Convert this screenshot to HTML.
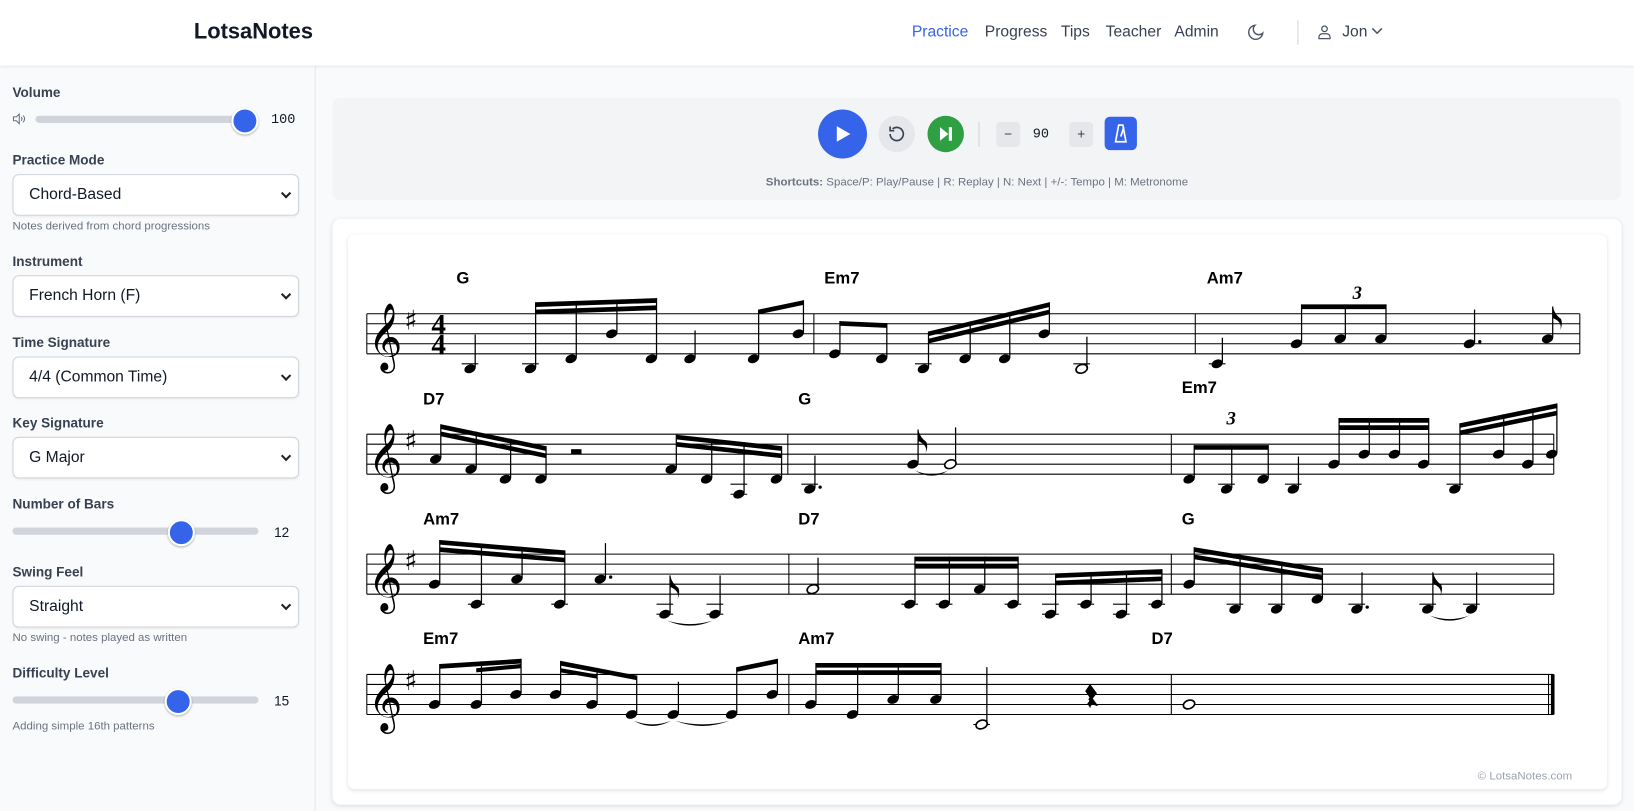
<!DOCTYPE html>
<html><head><meta charset="utf-8">
<style>
html,body{margin:0;padding:0;width:1634px;height:811px;overflow:hidden;background:#f9fafb;}
#w{position:absolute;left:0;top:0;width:1568px;height:778px;transform:scale(1.04209,1.04242);transform-origin:0 0;font-family:"Liberation Sans","DejaVu Sans",sans-serif;color:#111827;}
.hdr{position:absolute;left:0;top:0;width:1568px;height:63px;background:#fff;box-shadow:0 1px 3px rgba(0,0,0,.12);z-index:2}
.logo{position:absolute;left:186px;top:19px;font-size:21px;font-weight:bold;color:#111827}
.nav{position:absolute;top:22px;font-size:15px;color:#374151}
.side{position:absolute;left:0;top:63px;width:302px;height:715px;border-right:1px solid #e5e7eb;background:#f9fafb}
.lbl{position:absolute;left:12px;font-size:13px;font-weight:bold;color:#374151}
.sel{position:absolute;left:12px;width:273px;height:38px;background:#fff;border:1px solid #d1d5db;border-radius:6px;box-shadow:0 1px 2px rgba(0,0,0,.06);font-size:15px;line-height:38px;text-indent:15px;color:#111827}
.sel:after{content:"";position:absolute;right:8px;top:14px;width:5px;height:5px;border-right:2px solid #222;border-bottom:2px solid #222;transform:rotate(45deg)}
.hint{position:absolute;left:12px;font-size:11px;color:#6b7280}
.trk{position:absolute;height:7px;border-radius:4px;background:#d1d5db}
.th{position:absolute;width:22px;height:22px;border-radius:50%;background:#3563e9;border:2px solid #fff;box-shadow:0 1px 2px rgba(0,0,0,.3)}
.val{position:absolute;font-size:13px;color:#111827}
.ctrl{position:absolute;left:319px;top:94px;width:1237px;height:98px;background:#f3f4f6;border-radius:8px}
.card{position:absolute;left:319px;top:210px;width:1237px;height:562px;background:#fff;border-radius:8px;box-shadow:0 1px 4px rgba(0,0,0,.12)}
.inner{position:absolute;left:334px;top:225px;width:1208px;height:532px;background:#fff;border-radius:6px;box-shadow:0 1px 4px rgba(0,0,0,.12)}
</style></head><body><div id="w">
<div class="hdr">
<div class="logo">LotsaNotes</div>
<div class="nav" style="left:875px;color:#3563e9">Practice</div>
<div class="nav" style="left:945px">Progress</div>
<div class="nav" style="left:1018px">Tips</div>
<div class="nav" style="left:1061px">Teacher</div>
<div class="nav" style="left:1127px">Admin</div>
<svg style="position:absolute;left:1196px;top:22px" width="18" height="18" viewBox="0 0 24 24" fill="none" stroke="#4b5563" stroke-width="1.8"><path d="M21 13A9 9 0 1 1 11 3a7 7 0 0 0 10 10z"/></svg>
<div style="position:absolute;left:1245px;top:19px;width:1px;height:24px;background:#d1d5db"></div>
<svg style="position:absolute;left:1263px;top:22px" width="16" height="18" viewBox="0 0 24 24" fill="none" stroke="#4b5563" stroke-width="1.8"><circle cx="12" cy="7" r="4"/><path d="M4 21v-2a5 5 0 0 1 5-5h6a5 5 0 0 1 5 5v2z"/></svg>
<div class="nav" style="left:1288px">Jon</div>
<svg style="position:absolute;left:1316px;top:26px" width="11" height="8" viewBox="0 0 12 8" fill="none" stroke="#4b5563" stroke-width="1.6"><path d="M1 1l5 5 5-5"/></svg>
</div>

<div class="side">
<div class="lbl" style="top:18px">Volume</div>
<svg style="position:absolute;left:12px;top:45px" width="13" height="12" viewBox="0 0 14 12" fill="none" stroke="#6b7280" stroke-width="1.1"><path d="M1 4h3l3-3v10L4 8H1z"/><path d="M9 4q1.5 2 0 4M11 2.5q3 3.5 0 7"/></svg>
<div class="trk" style="left:34px;top:48px;width:206px"></div><div class="th" style="left:222px;top:40px"></div>
<div class="val" style="left:260px;top:44px;font-family:'Liberation Mono',monospace">100</div>
<div class="lbl" style="top:83px">Practice Mode</div>
<div class="sel" style="top:104px">Chord-Based</div>
<div class="hint" style="top:148px">Notes derived from chord progressions</div>
<div class="lbl" style="top:180px">Instrument</div>
<div class="sel" style="top:201px">French Horn (F)</div>
<div class="lbl" style="top:258px">Time Signature</div>
<div class="sel" style="top:279px">4/4 (Common Time)</div>
<div class="lbl" style="top:335px">Key Signature</div>
<div class="sel" style="top:356px">G Major</div>
<div class="lbl" style="top:413px">Number of Bars</div>
<div class="trk" style="left:12px;top:443px;width:236px"></div><div class="th" style="left:161px;top:435px"></div>
<div class="val" style="left:263px;top:440px">12</div>
<div class="lbl" style="top:478px">Swing Feel</div>
<div class="sel" style="top:499px">Straight</div>
<div class="hint" style="top:543px">No swing - notes played as written</div>
<div class="lbl" style="top:575px">Difficulty Level</div>
<div class="trk" style="left:12px;top:605px;width:236px"></div><div class="th" style="left:158px;top:597px"></div>
<div class="val" style="left:263px;top:602px">15</div>
<div class="hint" style="top:628px">Adding simple 16th patterns</div>
</div>

<div class="ctrl">
<div style="position:absolute;left:466px;top:11px;width:47px;height:47px;border-radius:50%;background:#3563e9"></div>
<svg style="position:absolute;left:482px;top:26px" width="16" height="17"><path d="M2 1l13 7.5L2 16z" fill="#fff"/></svg>
<div style="position:absolute;left:524px;top:17px;width:35px;height:35px;border-radius:50%;background:#e5e7eb"></div>
<svg style="position:absolute;left:532px;top:25px" width="19" height="19" viewBox="0 0 24 24" fill="none" stroke="#374151" stroke-width="2"><path d="M4 12a8 8 0 1 0 3-6.2"/><path d="M4 3v5h5"/></svg>
<div style="position:absolute;left:571px;top:17px;width:35px;height:35px;border-radius:50%;background:#2ea043"></div>
<svg style="position:absolute;left:581px;top:27px" width="15" height="15"><path d="M2 1l8 6.5L2 14z" fill="#fff"/><rect x="10.5" y="1" width="3" height="13" fill="#fff"/></svg>
<div style="position:absolute;left:620px;top:23px;width:1px;height:24px;background:#d1d5db"></div>
<div style="position:absolute;left:637px;top:23px;width:23px;height:24px;border-radius:4px;background:#e5e7eb;text-align:center;line-height:24px;font-size:13px;color:#374151">−</div>
<div style="position:absolute;left:672px;top:27px;font-family:'Liberation Mono',monospace;font-size:13px">90</div>
<div style="position:absolute;left:707px;top:23px;width:23px;height:24px;border-radius:4px;background:#e5e7eb;text-align:center;line-height:24px;font-size:13px;color:#374151">+</div>
<div style="position:absolute;left:741px;top:18px;width:31px;height:32px;border-radius:5px;background:#3563e9"></div>
<svg style="position:absolute;left:749px;top:24px" width="15" height="20" viewBox="0 0 15 20" fill="none" stroke="#fff" stroke-width="1.6"><path d="M5.5 2h4l3 16h-10z"/><path d="M7.5 13l3-9"/></svg>
<div style="position:absolute;left:0;width:1237px;top:75px;text-align:center;font-size:11px;color:#6b7280"><b>Shortcuts:</b> Space/P: Play/Pause | R: Replay | N: Next | +/-: Tempo | M: Metronome</div>
</div>

<div class="card"></div>
<div class="inner"></div>
<svg id="sc" style="position:absolute;left:0;top:0" width="1568" height="778"></svg>
<div style="position:absolute;left:1418px;top:739px;font-size:11px;color:#9ca3af">© LotsaNotes.com</div>
</div>
<script>
var s='',G=4.8;
function L(x1,y1,x2,y2,w){s+='<line x1="'+x1+'" y1="'+y1+'" x2="'+x2+'" y2="'+y2+'" stroke="#000" stroke-width="'+(w||1)+'"/>';}
function T(x,y,t,st){s+='<text x="'+x+'" y="'+y+'" style="'+st+'">'+t+'</text>';}
function staff(T0,x1,x2,bars,first){for(var i=0;i<5;i++)L(x1,T0+i*9.6,x2,T0+i*9.6);L(x1,T0,x1,T0+38.4);
bars.forEach(function(b){L(b,T0,b,T0+38.4)});
T(x1+1,T0+41,'𝄞','font-family:DejaVu Sans;font-size:56px');
T(x1+36,T0+15,'♯','font-family:DejaVu Sans;font-size:26px;font-weight:bold');
if(first){T(x1+62,T0+20,'4','font-family:Liberation Serif;font-weight:bold;font-size:28px');T(x1+62,T0+39,'4','font-family:Liberation Serif;font-weight:bold;font-size:28px');}}
function yy(T0,st){return T0+38.4-st*G;}
function head(x,y,hollow){s+='<ellipse cx="'+x+'" cy="'+y+'" rx="5.6" ry="4" transform="rotate(-20 '+x+' '+y+')" fill="'+(hollow?'#fff':'#000')+'" stroke="#000" stroke-width="'+(hollow?1.6:0)+'"/>';}
function ledg(T0,x,st){for(var k=-2;k>=st;k-=2)L(x-8,yy(T0,k),x+8,yy(T0,k),1);}
function nt(T0,x,st,top,o){o=o||{};var y=yy(T0,st);ledg(T0,x,st);head(x,y,o.h);if(!o.w)L(x+5,y-1,x+5,top,1.2);if(o.d)s+='<circle cx="'+(x+10)+'" cy="'+(y-2)+'" r="1.6"/>';
if(o.f)s+='<path d="M'+(x+5)+' '+top+'q2 8 8 12q2 5-1 11q3-8-7-12z"/>';}
function grp(T0,ns,y1,y2,nb){var x1=ns[0][0]+5,x2=ns[ns.length-1][0]+5;
ns.forEach(function(n){var bx=n[0]+5;var t=y1+(y2-y1)*(bx-x1)/(x2-x1);nt(T0,n[0],n[1],t);});
for(var b=0;b<nb;b++)s+='<polygon points="'+x1+','+(y1+b*7)+' '+x2+','+(y2+b*7)+' '+x2+','+(y2+b*7+4.5)+' '+x1+','+(y1+b*7+4.5)+'"/>';}
function tie(x1,x2,y){s+='<path d="M'+x1+' '+y+'q'+((x2-x1)/2)+' 10 '+(x2-x1)+' 0q-'+((x2-x1)/2)+' 7 -'+(x2-x1)+' 0z"/>';}
function ch(x,y,t){T(x,y,t,'font-family:Liberation Sans;font-weight:bold;font-size:16px');}
var CH='font-family:Liberation Serif;font-style:italic;font-weight:bold;font-size:18px';
var A=301;staff(A,352,1516,[781,1147,1516],1);
ch(438,272,'G');ch(791,272,'Em7');ch(1158,272,'Am7');
nt(A,451,-3,321);grp(A,[[509,-3],[548,-1],[587,4],[625,-1]],290,286,2);nt(A,662,-1,317);grp(A,[[723,-1],[766,4]],297,288,1);
grp(A,[[801,0],[846,-1]],308,310,1);grp(A,[[886,-3],[926,-1],[964,-1],[1002,4]],318,290,2);nt(A,1038,-3,323,{h:1});
nt(A,1168,-2,324);grp(A,[[1244,2],[1286,3],[1325,3]],292,292,1);T(1298,287,'3',CH);nt(A,1410,2,297,{d:1});nt(A,1485,3,294,{f:1});
A=416.5;staff(A,352,1491,[756,1124,1491]);
ch(406,388,'D7');ch(766,388,'G');ch(1134,377,'Em7');
grp(A,[[418,3],[452,1],[485,-1],[519,-1]],407,428,2);s+='<rect x="548" y="'+(A+14.4)+'" width="10" height="5"/>';
grp(A,[[644,1],[678,-1],[709,-4],[745,-1]],417,428,2);
nt(A,777,-3,437,{d:1});nt(A,876,2,412,{f:1});tie(878,910,yy(A,2)+6);nt(A,912,2,410,{h:1});
grp(A,[[1141,-1],[1177,-3],[1212,-1]],427,427,1);T(1177,407,'3',CH);nt(A,1241,-3,438);
grp(A,[[1280,2],[1309,4],[1338,4],[1366,2]],401,401,2);grp(A,[[1396,-3],[1438,4],[1466,2],[1489,4]],406,387,2);
A=531.6;staff(A,352,1491,[757,1124,1491]);
ch(406,503,'Am7');ch(766,503,'D7');ch(1134,503,'G');
grp(A,[[417,2],[457,-2],[496,3],[537,-2]],518,528,2);nt(A,576,3,521,{d:1});
nt(A,638,-4,552,{f:1});tie(640,684,yy(A,-4)+6);nt(A,686,-4,552);
nt(A,780,1,535,{h:1});grp(A,[[873,-2],[906,-2],[940,1],[972,-2]],534,534,2);grp(A,[[1008,-4],[1042,-2],[1076,-4],[1110,-2]],550,546,2);
grp(A,[[1141,2],[1185,-3],[1225,-3],[1264,-1]],525,545,2);nt(A,1302,-3,549,{d:1});nt(A,1370,-3,549,{f:1});tie(1372,1410,yy(A,-3)+6);nt(A,1412,-3,549);
A=647;staff(A,352,1491,[757,1124]);
ch(406,618,'Em7');ch(766,618,'Am7');ch(1105,618,'D7');
grp(A,[[417,2],[457,2],[495,4]],637,632,1);s+='<polygon points="457,641 500,637 500,641 457,645"/>';
grp(A,[[533,4],[568,2],[606,0]],634,648,1);s+='<polygon points="538,641 573,647 573,651 538,645"/>';
nt(A,646,0,654);tie(608,644,yy(A,0)+6);tie(648,700,yy(A,0)+6);grp(A,[[702,0],[741,4]],640,632,1);
grp(A,[[778,2],[818,0],[857,3],[898,3]],636,636,2);nt(A,942,-2,640,{h:1});
s+='<path d="M1046 '+(A+10)+'l6 8-4 5 5 7q-6-3-7 1l-2-3q3-3 1-4l1-2-4-6z" stroke="#000" stroke-width="1"/>';
head(1141,yy(A,2),1);L(1486,A,1486,A+38.4,1);L(1490,A,1490,A+38.4,3.5);
document.getElementById('sc').innerHTML=s;
</script>
</body></html>
